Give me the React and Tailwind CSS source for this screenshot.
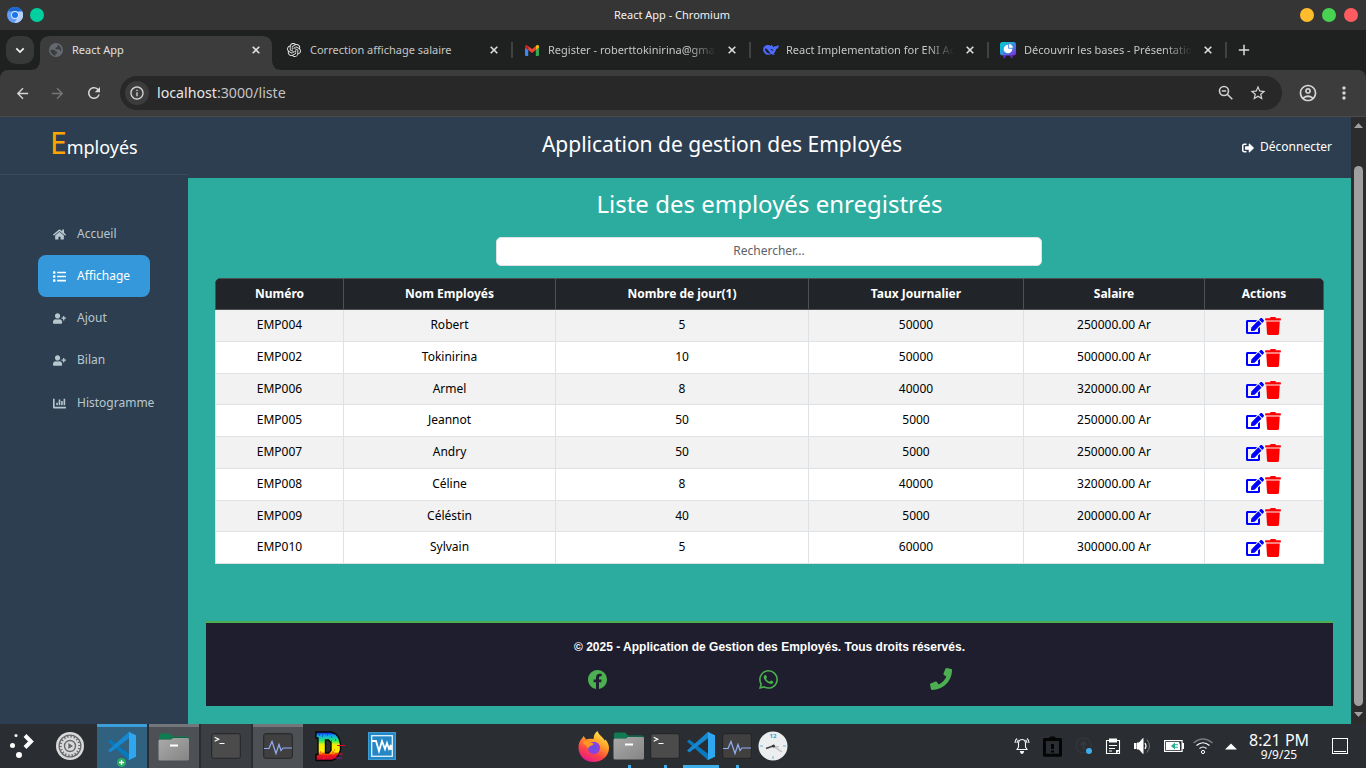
import React from "react";
import { FaHome, FaList, FaUserPlus, FaChartBar, FaSignOutAlt, FaEdit, FaTrash, FaPhone } from "react-icons/fa";
import { BsFacebook, BsWhatsapp } from "react-icons/bs";
import { SiOpenai } from "react-icons/si";
import { MdArrowBack, MdArrowForward, MdRefresh, MdStarBorder, MdMoreVert, MdOutlineInfo, MdOutlineAccountCircle } from "react-icons/md";

const rows = [
  ["EMP004", "Robert", "5", "50000", "250000.00 Ar"],
  ["EMP002", "Tokinirina", "10", "50000", "500000.00 Ar"],
  ["EMP006", "Armel", "8", "40000", "320000.00 Ar"],
  ["EMP005", "Jeannot", "50", "5000", "250000.00 Ar"],
  ["EMP007", "Andry", "50", "5000", "250000.00 Ar"],
  ["EMP008", "Céline", "8", "40000", "320000.00 Ar"],
  ["EMP009", "Céléstin", "40", "5000", "200000.00 Ar"],
  ["EMP010", "Sylvain", "5", "60000", "300000.00 Ar"],
];
const headers = ["Numéro", "Nom Employés", "Nombre de jour(1)", "Taux Journalier", "Salaire", "Actions"];
const cols = "grid grid-cols-[128px_212px_253px_215px_181px_120px]";

function GlobeIcon() {
  return (
    <svg width="14" height="14" viewBox="0 0 14 14">
      <circle cx="7" cy="7" r="7" fill="#646871" />
      <path d="M1.5 6.8h3.2c1.2 0 1.6.8 1.6 1.7h1.8v2.2H6.5v2.1C3.8 12.600 1.500 10 1.500 6.800zM6 1.700h2.600v1.600c0 1-1 1.400-2 1.400v1.600h3.200c1 0 1.300.7 1.300 1.700h1c.6-2.500-.8-5.400-3.500-6.300z" fill="#3c3c3c" />
    </svg>
  );
}
function GmailIcon() {
  return (
    <svg width="14" height="11" viewBox="0 0 14 11">
      <path d="M0 2.500 3.200 5v6H1a1 1 0 0 1-1-1z" fill="#4285f4" />
      <path d="M14 2.500 10.800 5v6H13a1 1 0 0 0 1-1z" fill="#34a853" />
      <path d="M3.200 1 7 3.900 10.800 1v4L7 7.900 3.200 5z" fill="#ea4335" />
      <path d="M0 1.600C0 .1 1.500-.4 2.600.5l.6.5v4L0 2.600z" fill="#c5221f" />
      <path d="M14 1.600c0-1.500-1.500-2-2.600-1.100l-.6.500v4L14 2.600z" fill="#fbbc04" />
    </svg>
  );
}
function WhaleIcon() {
  return (
    <svg width="16" height="12" viewBox="0 0 16 12">
      <path d="M.2 5.500C.2 2.700 2.500 1 5 1c1.200 0 1.900.6 2.600 1L8.500.6c.8.700.9 1.700 1.600 2.200.500.400 1 .300 1.300-.9.600.500 1.400.500 2.100.100.600-.4 1.400-.500 2.300-.4-.2 2.200-1.300 3.200-2.700 3.500-.3 1.900-1.100 3.300-2.300 4.400l1.300.8c-1.300.6-2.700.4-3.500-.2C4.300 12 .2 9.600.2 5.500z" fill="#4d6bfe" />
      <path d="M2 4.400c2.400-.2 3.300 2.700 5.800 5C5.400 10.200 2 8 2 4.400z" fill="#1f2120" />
      <path d="M7.300 5.200c1.200-.6 2.600.2 3 1.600-.8.300-1.500-.2-1.900-.8z" fill="#1f2120" />
    </svg>
  );
}
function PieIcon() {
  return (
    <svg width="16" height="16" viewBox="0 0 16 16" className="-ml-px">
      <defs>
        <linearGradient id="pie" x1="0" y1="0" x2="1" y2="1">
          <stop offset="0" stopColor="#00d0d0" /><stop offset=".45" stopColor="#2d9bdc" /><stop offset="1" stopColor="#8a1fe0" />
        </linearGradient>
      </defs>
      <rect width="16" height="13.500" rx="2.500" fill="url(#pie)" />
      <path d="M5 13 4 15.800M11 13l1 2.800" stroke="#7424e0" strokeWidth="2" />
      <circle cx="8" cy="7" r="4.300" fill="#fff" />
      <path d="M8.600 1.500v4.800h4.600A4.600 4.600 0 0 0 8.600 1.500z" fill="#fff" stroke="#4587e0" strokeWidth=".9" />
    </svg>
  );
}
function CloseIcon() {
  return (
    <svg width="8" height="8" viewBox="0 0 8 8" className="shrink-0"><path d="M.7.7l6.600 6.600M7.300.7L.7 7.300" stroke="#dedede" strokeWidth="1.600" /></svg>
  );
}
function Tab({ icon, title, active, fade }) {
  return (
    <div className={"relative flex h-[34px] w-[238px] shrink-0 items-center pb-[6px] pl-[9px] " + (active ? "text-[#e0e0e0]" : "text-[#c6c6c6]")}>
      {active && (
        <svg className="absolute left-[-10px] top-0" width="252" height="34" viewBox="0 0 252 34">
          <path d="M0 34Q10 34 10 24V10Q10 0 20 0H232Q242 0 242 10V24Q242 34 252 34Z" fill="#3c3c3c" />
        </svg>
      )}
      <div className="relative flex w-[22px] shrink-0 items-center">{icon}</div>
      <div className={"relative ml-px w-[168px] overflow-hidden whitespace-nowrap text-[11px] leading-[18px] " + (fade ? "[mask-image:linear-gradient(to_right,black_84%,transparent_100%)]" : "")}>{title}</div>
      <div className="relative ml-3 flex"><CloseIcon /></div>
      {!active && <div className="ml-[13px] h-4 w-[2px] bg-[#414342]" />}
    </div>
  );
}
function NavItem({ icon, label, active }) {
  return (
    <div className={"flex h-[42.200px] items-center gap-[11px] rounded-lg pl-[15px] text-[12px] " + (active ? "w-28 bg-[#3498db] text-white" : "w-[130px] text-[#b8c7ce]")}>
      <span className="mt-px text-[13px]">{icon}</span>
      <span className="leading-[18px]">{label}</span>
    </div>
  );
}

function VsCode() {
  return (
    <svg width="28" height="28" viewBox="0 0 28 28">
      <path d="M0 9.500 2.300 7.500 22 22.500V28L20 27.300z" fill="#0879be" />
      <path d="M0 18.500 2.300 20.500 22 5.500V0l-2 .7z" fill="#1688d1" />
      <path d="M20 .5 21 0l7 3.300v21.400L21 28l-1-.5q1 .2 1-1.300V1.800Q21 .3 20 .5z" fill="#2ea7f0" />
    </svg>
  );
}
function Folder() {
  return (
    <svg width="32" height="28" viewBox="0 0 32 28">
      <defs><linearGradient id="fold" x1="0" y1="0" x2="1" y2="1"><stop offset="0" stopColor="#aaa" /><stop offset="1" stopColor="#858585" /></linearGradient></defs>
      <path d="M1 2Q1 .5 2.500.5H12l3 3h14q2 0 2 2V14H1z" fill="#117a52" />
      <path d="M2 6h11l2-1.500h15V12H2z" fill="#07543a" />
      <path d="M.500 8Q.500 6.500 2 6.500h11L15 5h14.500Q31 5 31 6.500V26q0 1.500-1.500 1.500H2Q.500 27.500.500 26z" fill="url(#fold)" />
      <path d="M12 12.500h8" stroke="#fff" strokeWidth="2" />
    </svg>
  );
}
function Terminal() {
  return (
    <svg width="30" height="26" viewBox="0 0 30 26">
      <rect x=".7" y=".7" width="28.600" height="24.600" rx="2" fill="#4b4b4b" stroke="#242424" strokeWidth="1" />
      <path d="M3.700 4.300l4 2-4 2M8.500 10.500h5" stroke="#fff" strokeWidth="1.200" fill="none" />
    </svg>
  );
}
function Monitor() {
  return (
    <svg width="30" height="26" viewBox="0 0 30 26">
      <rect x=".7" y=".7" width="28.600" height="24.600" rx="2" fill="#404040" stroke="#232323" strokeWidth="1" />
      <path d="M1 15.500h5l3-7 4 12 3-9 2 6 2-2.500h9" stroke="#93aef3" strokeWidth="1.200" fill="none" />
    </svg>
  );
}
function Firefox() {
  return (
    <svg width="31" height="31" viewBox="0 0 31 31">
      <defs>
        <linearGradient id="ff" x1=".8" y1="0" x2=".3" y2="1"><stop offset="0" stopColor="#fff34f" /><stop offset=".4" stopColor="#ff9b26" /><stop offset=".7" stopColor="#ff4542" /><stop offset="1" stopColor="#e5168f" /></linearGradient>
        <radialGradient id="ffc"><stop offset="0" stopColor="#5a55dd" /><stop offset="1" stopColor="#9a3ce0" /></radialGradient>
      </defs>
      <path d="M5.500 5l2.700 3.400q2-1 4.300-.7L15.500 8q.2-5.500 4-8 .8 3 4 5.500 2 1.500 3 4l1-1q3.500 4.500 3.500 8.500C31 25 24 31 15.500 31S.500 25 .500 16.500q0-6 3.800-9.500z" fill="url(#ff)" />
      <circle cx="15.800" cy="17" r="6.200" fill="url(#ffc)" />
      <path d="M4.500 12q3-3.500 7-1l4 1.500q0 1.800-3.500 2.500l-2 2.500q-1-3-5.500-5.500z" fill="#ff9825" />
    </svg>
  );
}
function Clock() {
  return (
    <svg width="30" height="30" viewBox="0 0 30 30">
      <circle cx="15" cy="15" r="14.500" fill="#eceeef" />
      <path d="M2 15h3M25 15h3M15 25v3" stroke="#69b4dc" strokeWidth="1" />
      <text x="15" y="7" fontSize="6" textAnchor="middle" fill="#3b9bd0" className="font-bold">12</text>
      <path d="M15 15l9 6M15 15l6 1" stroke="#b8babb" strokeWidth="1.200" />
      <path d="M8 17.500 15 15" stroke="#444" strokeWidth="1.800" /><circle cx="15.500" cy="15" r="1.500" fill="#333" />
    </svg>
  );
}
function RainbowD() {
  return (
    <svg width="30" height="31" viewBox="0 0 30 31">
      <defs><linearGradient id="rain" x1="0" y1="0" x2="0" y2="1"><stop offset="0" stopColor="#1013e8" /><stop offset=".13" stopColor="#10a8f0" /><stop offset=".3" stopColor="#26e96a" /><stop offset=".45" stopColor="#f5ef00" /><stop offset=".68" stopColor="#fff000" /><stop offset=".82" stopColor="#f01818" /><stop offset="1" stopColor="#d00041" /></linearGradient></defs>
      <path d="M1 1h15l5 2 3 4 1.500 6v6l-2 5-3 4-4 1.500H1v-6h2V7H1zM10.500 9v13h3l2.500-2.500v-8L13.500 9z" fill="url(#rain)" fillRule="evenodd" stroke="#080808" strokeWidth="1.400" />
      <path d="M22 14.500h8M20 23h8" stroke="#d6102a" strokeWidth="1" />
      <path d="M20 27h7" stroke="#a010a0" strokeWidth="1" />
      <path d="M4 4h1m2 1h1m4-1h1m3 2h1m3 3h1m-5 1h1" stroke="#0722a4" />
      <path d="M5 21h1m1 2h2m8-2h2m-7 4h1m6-1h2m-2-5h1m-12 8h2" stroke="#ff2b0a" />
    </svg>
  );
}
function Waveform() {
  return (
    <svg width="28" height="28" viewBox="0 0 28 28">
      <rect x=".500" y=".500" width="27" height="27" fill="#2488c6" stroke="#3c9cd4" />
      <rect x="3.700" y="3.700" width="20.600" height="20.600" fill="none" stroke="#e5f3fb" strokeWidth="1.300" />
      <path d="M4 9h4l3 10 3-10 3 8 2-6 2 6 2-4v5" stroke="#fff" strokeWidth="1.800" fill="none" />
    </svg>
  );
}
function Settings() {
  return (
    <svg width="30" height="30" viewBox="0 0 30 30">
      <circle cx="15" cy="15" r="14" fill="#dadada" />
      <circle cx="15" cy="15" r="11.500" fill="#66686a" />
      <circle cx="15" cy="15" r="9.200" fill="none" stroke="#dadada" strokeWidth="2" strokeDasharray="2 1.200" />
      <circle cx="15" cy="15" r="7.300" fill="none" stroke="#dadada" strokeWidth="2.200" />
      <circle cx="15" cy="15" r="4.800" fill="#dadada" />
      <path d="M13.300 12l4.700 3-4.700 3z" fill="#66686a" />
    </svg>
  );
}
function Launcher() {
  return (
    <svg width="26" height="26" viewBox="0 0 26 26" fill="#fff">
      <circle cx="7" cy="3.500" r="1.500" /><circle cx="3.500" cy="13.500" r="2.500" /><circle cx="10" cy="23" r="3" />
      <path d="M16 3.500l6 6-6 6" fill="none" stroke="#fff" strokeWidth="4" />
    </svg>
  );
}

function TitleBar() {
  return (
    <div className="grid h-[30px] grid-cols-[1fr_auto_1fr] items-center bg-[#353535] pl-[7px] pr-2 text-[11px] text-[#f2f2f2]">
      <div className="flex items-center gap-[7px]">
        <svg width="16" height="16" viewBox="0 0 16 16">
          <circle cx="8" cy="8" r="8" fill="#669df6" /><path d="M1 4.200A8 8 0 0 1 15.200 4.500H8z" fill="#1967d2" /><path d="M15.300 4.500A8 8 0 0 1 7.500 16L11.500 9V4.500z" fill="#b5d0fb" />
          <circle cx="8" cy="8" r="3.900" fill="#e2ecfd" /><circle cx="8" cy="8" r="3" fill="#1a73e8" />
        </svg>
        <div className="h-[14px] w-[14px] rounded-full bg-[#00cf9f]" />
      </div>
      <div className="mr-[21px] leading-[18px]">React App - Chromium</div>
      <div className="flex justify-end gap-2">
        <div className="h-[14px] w-[14px] rounded-full bg-[#ffbd2e]" />
        <div className="h-[14px] w-[14px] rounded-full bg-[#48d251]" />
        <div className="h-[14px] w-[14px] rounded-full bg-[#ff5b60]" />
      </div>
    </div>
  );
}

function Chrome() {
  return (
    <>
      <TitleBar />
      <div className="flex h-10 items-end bg-[#1f2120] pl-[6px]">
        <div className="mb-[6px] mr-[6px] flex h-7 w-7 shrink-0 items-center justify-center rounded-[10px] bg-[#373938]">
          <svg width="10" height="7" viewBox="0 0 10 7"><path d="M1.300 1.300 5 5l3.700-3.700" stroke="#f2f2f2" strokeWidth="1.700" fill="none" /></svg>
        </div>
        <div className="flex h-[34px]">
          <Tab active icon={<GlobeIcon />} title="React App" />
          <Tab icon={<SiOpenai size={14} color="#e8e8e8" />} title="Correction affichage salaire" />
          <Tab icon={<GmailIcon />} title="Register - roberttokinirina@gmail" fade />
          <Tab icon={<WhaleIcon />} title="React Implementation for ENI Ac" fade />
          <Tab icon={<PieIcon />} title="Découvrir les bases - Présentation" fade />
          <svg className="ml-2 mt-2" width="12" height="12" viewBox="0 0 12 12"><path d="M6 .8v10.400M.8 6h10.400" stroke="#dcdcdc" strokeWidth="1.500" /></svg>
        </div>
      </div>
      <div className="bg-[#1f2120]">
        <div className="flex h-[47px] items-center rounded-t-[8px] border-b border-[#4a4a4a] bg-[#3c3c3c] pl-[14px] text-[#d6d6d6]">
          <MdArrowBack size={17} className="shrink-0" />
          <MdArrowForward size={17} className="ml-[18px] shrink-0 text-[#777]" />
          <MdRefresh size={18} className="ml-[19px] shrink-0" />
          <div className="ml-[17px] flex h-[34px] w-[1162px] shrink-0 items-center rounded-full bg-[#282828] pl-[5px] pr-[15px]">
            <div className="flex h-6 w-6 items-center justify-center rounded-full bg-[#3c3c3c]"><MdOutlineInfo size={16} /></div>
            <div className="ml-2 text-[14.200px] leading-5 text-[#c4c4c4]"><span className="text-[#e6e6e6]">localhost</span>:3000/liste</div>
            <svg className="ml-auto" width="16" height="16" viewBox="0 0 16 16" fill="none" stroke="#d0d0d0" strokeWidth="1.600"><circle cx="6" cy="6" r="4.500" /><path d="M9.300 9.300 14.300 14.300M3.800 6h4.400" /></svg>
            <MdStarBorder size={18} className="ml-[15px]" />
          </div>
          <MdOutlineAccountCircle size={20} className="ml-4 shrink-0" />
          <MdMoreVert size={20} className="ml-4 shrink-0" />
        </div>
      </div>
    </>
  );
}

function Employees() {
  return (
    <div className="mx-auto mt-3 w-[1109px] overflow-hidden rounded-t-[6px] text-center text-[12px]">
      <div className={cols + " h-[31px] border-t border-[#4d5154] bg-[#212529] font-bold text-white"}>
        {headers.map((h) => <div key={h} className="border-l border-[#4d5154] leading-[30px] last:border-r">{h}</div>)}
      </div>
      <div className="grid grid-rows-[32px_32px_31px_32px_32px_32px_31px_33px]">
        {rows.map((r, i) => (
          <div key={r[0]} className={cols + " border-t text-black last:border-b last:border-b-[#dee2e6] " + (i === 0 ? "border-t-[#4d5154] " : "border-t-[#dee2e6] ") + (i % 2 ? "bg-white" : "bg-[#f2f2f2]")}>
            {r.map((c, j) => <div key={j} className="border-l border-[#dee2e6] leading-[30px]">{c}</div>)}
            <div className="flex items-start justify-center border-x border-[#dee2e6] pt-[7px]">
              <FaEdit size={18} color="#0000ff" />
              <FaTrash size={18} color="#ff0000" />
            </div>
          </div>
        ))}
      </div>
    </div>
  );
}

function Page() {
  return (
    <div className="flex h-[607px] bg-[#2d3e50]">
      <aside className="w-[188px]">
        <div className="h-[58px] border-b border-[#3b4b5d] pl-[50px] leading-[52px] text-white">
          <span className="text-[30px] text-[#ffa500]">E</span><span className="text-[18px]">mployés</span>
        </div>
        <nav className="mt-[37.800px] flex flex-col pl-[38px]">
          <NavItem icon={<FaHome />} label="Accueil" />
          <NavItem icon={<FaList />} label="Affichage" active />
          <NavItem icon={<FaUserPlus />} label="Ajout" />
          <NavItem icon={<FaUserPlus />} label="Bilan" />
          <NavItem icon={<FaChartBar />} label="Histogramme" />
        </nav>
      </aside>
      <div className="flex w-[1163px] flex-col">
        <header className="grid h-[61px] grid-cols-[1fr_auto_1fr] items-center px-[19px] text-white">
          <div />
          <h1 className="-mt-2 ml-[-95px] text-[21px] leading-8">Application de gestion des Employés</h1>
          <div className="mt-[-2px] flex items-center justify-end gap-[6px] text-[12px]"><FaSignOutAlt size={12} className="mt-[2px]" />Déconnecter</div>
        </header>
        <main className="flex flex-1 flex-col bg-[#2cac9f]">
          <h2 className="mt-[10px] text-center text-[24px] leading-8 text-white">Liste des employés enregistrés</h2>
          <input className="ml-[308px] mt-[17px] block h-[29px] w-[546px] rounded-[5px] border border-[#dee2e6] bg-white pb-[2px] text-center text-[12px] outline-none placeholder:text-[#5d6268]" placeholder="Rechercher..." />
          <Employees />
          <footer className="mx-auto mb-[18px] mt-auto flex h-[85px] w-[1127px] flex-col items-center border-t-2 border-[#4caf50] bg-[#1e1e2f] pt-[15px] font-['Liberation_Sans',sans-serif] text-[12px] font-bold text-white">
            <div className="leading-[18px]">© 2025 - Application de Gestion des Employés. Tous droits réservés.</div>
            <div className="mt-3 flex w-[517px] items-center justify-around pl-px text-[#4caf50]">
              <BsFacebook size={19} /><BsWhatsapp size={19} /><FaPhone size={22} />
            </div>
          </footer>
        </main>
      </div>
      <div className="flex w-[15px] flex-col items-center bg-[#2c2c2c]">
        <svg className="mt-[6px]" width="9" height="5" viewBox="0 0 9 5"><path d="M0 5 4.500 0 9 5z" fill="#a0a0a0" /></svg>
        <div className="mt-[38px] h-[540px] w-[9px] rounded-full bg-[#9f9f9f]" />
        <svg className="mt-[6px]" width="9" height="5" viewBox="0 0 9 5"><path d="M0 0h9L4.500 5z" fill="#a0a0a0" /></svg>
      </div>
    </div>
  );
}

function Tray() {
  return (
    <div className="ml-auto flex items-center">
      <svg width="16" height="18" viewBox="0 0 16 18" stroke="#f4f4f4" fill="none" strokeWidth="1.100"><path d="M3 12.500 4.500 10V6Q5 2.500 8 2.500T11.500 6v4l1.500 2.500zM1 6q0-3 2-4.500M3 6q0-2 1.500-3M15 6q0-3-2-4.500M13 6q0-2-1.500-3" /><path d="M6.500 14.500h3q-.3 2-1.500 2t-1.500-2z" fill="#fff" /></svg>
      <svg className="ml-3" width="21" height="23" viewBox="0 0 21 23"><path d="M2.500 4.500h16v15.800h-16z" fill="none" stroke="#050505" strokeWidth="3" strokeLinejoin="round" /><path d="M6 3q2 0 2.500-1.500h4Q13 3 15 3v3H6zM9 9h3v5H9zM9 15.500h3v2H9z" fill="#050505" /></svg>
      <svg className="ml-3" width="18" height="18" viewBox="0 0 18 18"><circle cx="8.500" cy="8.500" r="7.500" fill="none" stroke="#35393d" strokeWidth="1.200" /><path d="M8.500 13V5m-3 3 3-3 3 3" stroke="#35393d" strokeWidth="2" fill="none" /><circle cx="14" cy="14" r="3" fill="#3daee9" /></svg>
      <svg className="ml-3" width="16" height="17" viewBox="0 0 16 17" fill="none" stroke="#fff"><path d="M1.500 2.500h13v13h-13z" strokeWidth="1.100" /><path d="M4 .5h8v4H4z" fill="#fff" stroke="none" /><path d="M4 7.500h8M4 10.500h6M4 13h3" strokeWidth="1.100" /><path d="M11 16v-4h4z" fill="#fff" stroke="none" /></svg>
      <svg className="ml-[13px]" width="18" height="18" viewBox="0 0 18 18" fill="none" stroke="#fff"><path d="M1 6v6" strokeWidth="2" /><path d="M3 6h2l4-4.500v15L5 12H3z" fill="#fff" /><path d="M11 6q2 3 0 6" strokeWidth="1.200" /><path d="M13 2.500q5 6.500 0 13" stroke="#77797c" /></svg>
      <svg className="ml-3" width="20" height="12" viewBox="0 0 20 12"><rect x=".600" y=".600" width="17.500" height="10.800" fill="none" stroke="#fff" strokeWidth="1.200" /><path d="M2 2h13l1 3v5H2zM18 3h2v6h-2z" fill="#fff" /><path d="M7 6l4-3.500V4.300h3v1h-3v1.400h3v1h-3v1.800z" fill="#27ae97" /></svg>
      <svg className="ml-2" width="22" height="18" viewBox="0 0 22 18" fill="none"><path d="M1.500 6Q11-2 20.500 6" stroke="#77797c" strokeWidth="1.500" /><path d="M4.500 8.500Q11 3 17.500 8.500M7.500 11.500Q11 8.500 14.500 11.500" stroke="#fff" strokeWidth="1.200" /><circle cx="11" cy="15" r="1.600" stroke="#fff" /></svg>
      <svg className="ml-[11px]" width="12" height="7" viewBox="0 0 12 7"><path d="M0 6.500 6 .5l6 6z" fill="#fff" /></svg>
      <div className="ml-3 w-[60px] text-center text-[#fcfcfc]">
        <div className="whitespace-nowrap text-[16px] leading-[16px]">8:21 PM</div>
        <div className="text-[12px] leading-[13px]">9/9/25</div>
      </div>
      <svg className="ml-[23px] mr-[18px]" width="16" height="16" viewBox="0 0 16 16"><rect x=".5" y=".5" width="15" height="15" fill="none" stroke="#fff" /><path d="M2 13.500h12" stroke="#fff" /></svg>
    </div>
  );
}

function Taskbar() {
  return (
    <div className="flex h-11 items-center bg-[#2a2d32]">
      <div className="flex w-[97px] items-center pl-[9px]"><div className="mb-[2px]"><Launcher /></div><div className="ml-5"><Settings /></div></div>
      <div className="flex h-full gap-[2px]">
        <div className="relative flex h-full w-[50px] items-center justify-center border-t-[3px] border-[#3d9fda] bg-[#30627f] pb-[3px]">
          <VsCode />
          <svg className="absolute left-5 top-[31px]" width="9" height="9" viewBox="0 0 9 9"><circle cx="4.500" cy="4.500" r="4.500" fill="#27ae60" /><path d="M4.500 2v5M2 4.500h5" stroke="#fff" strokeWidth="1.300" /></svg>
        </div>
        <div className="flex w-[50px] items-center justify-center border-t-[3px] border-[#73767a] bg-[#4d5055] pb-px"><Folder /></div>
        <div className="flex w-[50px] items-center justify-center bg-[#3b3e43]"><Terminal /></div>
        <div className="flex w-[50px] items-center justify-center border-t-[3px] border-[#73767a] bg-[#4d5055] pb-[3px]"><Monitor /></div>
      </div>
      <div className="ml-[12px]"><RainbowD /></div>
      <div className="ml-[23px]"><Waveform /></div>
      <div className="ml-[179px] flex h-full">
        {[[<Firefox />, 0], [<Folder />, 1], [<Terminal />, 1], [<VsCode />, 2], [<Monitor />, 1], [<Clock />, 0]].map(([icon, state], i) => (
          <div key={i} className="flex w-9 flex-col items-center">
            <div className="flex h-[41px] items-center pt-[3px]">{icon}</div>
            {state > 0 && <div className={"h-[3px] bg-[#3daee9] " + (state === 2 ? "w-9" : "w-[3px]")} />}
          </div>
        ))}
      </div>
      <Tray />
    </div>
  );
}

export default function App() {
  return (
    <div className="h-[768px] w-[1366px] overflow-hidden font-['Noto_Sans',sans-serif]">
      <Chrome />
      <Page />
      <Taskbar />
    </div>
  );
}
